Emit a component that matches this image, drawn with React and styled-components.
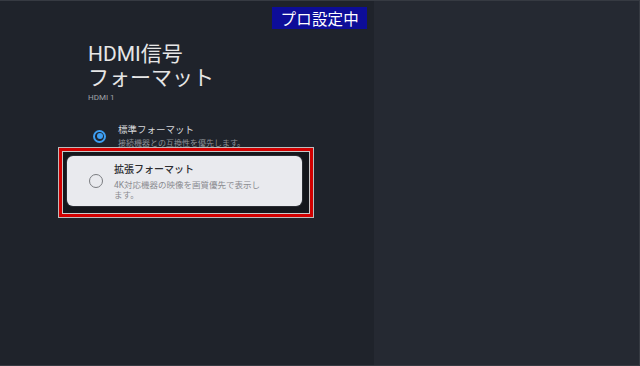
import React from "react";
import styled, { createGlobalStyle } from "styled-components";

const Global = createGlobalStyle`
  html, body { margin: 0; padding: 0; background: #1f232b; }
  * { box-sizing: border-box; }
  body { font-family: "Roboto", "Noto Sans CJK JP", sans-serif; }
`;

const Screen = styled.div`
  width: 640px;
  height: 366px;
  display: flex;
  border-top: 1px solid #363a42;
  border-right: 1px solid #363a42;
  border-bottom: 1px solid #363a42;
  overflow: hidden;
`;

const LeftPanel = styled.div`
  width: 374px;
  flex: none;
  background: #1f232b;
  display: flex;
  flex-direction: column;
  padding-top: 6px;
`;

const RightPanel = styled.div`
  flex: 1;
  background: #252932;
`;

const Badge = styled.div`
  align-self: flex-end;
  margin-right: 7px;
  height: 22px;
  padding: 0 8px;
  background: #0d0d98;
  color: #ffffff;
  font-family: "Noto Sans CJK JP", sans-serif;
  font-size: 15.5px;
  font-weight: 400;
  line-height: 22px;
  letter-spacing: 0.2px;
`;

const Header = styled.div`
  margin-top: 13px;
  padding-left: 88px;
  display: flex;
  flex-direction: column;
`;

const Title = styled.h1`
  margin: 0;
  font-family: "Roboto", "Noto Sans CJK JP", sans-serif;
  font-weight: 400;
  font-size: 21px;
  line-height: 24px;
  color: #e6e6e6;
`;

const SubTitle = styled.div`
  margin-top: 3px;
  font-family: "Roboto", sans-serif;
  font-size: 8px;
  line-height: 10px;
  color: #a0a3a8;
`;

const Options = styled.div`
  margin-top: 20px;
  display: flex;
  flex-direction: column;
`;

const Row = styled.div`
  display: flex;
  align-items: center;
  padding-left: 93px;
  gap: 12px;
`;

const RadioDot = styled.span`
  flex: none;
  width: ${(p) => p.$size}px;
  height: ${(p) => p.$size}px;
  border-radius: 50%;
  border: ${(p) => (p.$checked ? "2px solid #3d9ef2" : "1.5px solid #7a7c80")};
  display: flex;
  align-items: center;
  justify-content: center;
  &::after {
    content: "";
    display: ${(p) => (p.$checked ? "block" : "none")};
    width: 6px;
    height: 6px;
    border-radius: 50%;
    background: #3d9ef2;
  }
`;

const TextCol = styled.div`
  display: flex;
  flex-direction: column;
`;

const OptTitle = styled.div`
  font-family: "Noto Sans CJK JP", sans-serif;
  font-size: ${(p) => (p.$focused ? "10px" : "9.5px")};
  font-weight: ${(p) => (p.$focused ? 500 : 400)};
  line-height: 12px;
  color: ${(p) => (p.$focused ? "#2b2c30" : "#d6d7da")};
`;

const OptDesc = styled.div`
  margin-top: ${(p) => (p.$focused ? "5px" : "4px")};
  max-width: ${(p) => (p.$focused ? "150px" : "none")};
  font-family: "Roboto", "Noto Sans CJK JP", sans-serif;
  font-size: ${(p) => (p.$focused ? "8.5px" : "8px")};
  line-height: 10px;
  color: ${(p) => (p.$focused ? "#8a8b90" : "#8d9096")};
`;

const FocusFrame = styled.div`
  position: relative;
  z-index: 1;
  margin-top: -2px;
  margin-left: 58px;
  width: 256px;
  height: 71px;
  border: 1px solid #bcbcbc;
  background: #d20000;
  padding: 3px;
`;

const FrameInner = styled.div`
  height: 100%;
  border: 1px solid #c9c9c9;
  background: #15171c;
  padding: 4px 7px 7px 4px;
`;

const Card = styled.div`
  height: 100%;
  background: #e9eaee;
  border-radius: 6px;
  box-shadow: 0 0 0 1px #2a2d33;
  display: flex;
  align-items: center;
  padding-left: 22px;
  gap: 11px;
`;

export default function App() {
  return (
    <>
      <Global />
      <Screen>
        <LeftPanel>
          <Badge>プロ設定中</Badge>
          <Header>
            <Title>
              HDMI信号
              <br />
              フォーマット
            </Title>
            <SubTitle>HDMI 1</SubTitle>
          </Header>
          <Options>
            <Row>
              <RadioDot $checked $size={13} />
              <TextCol>
                <OptTitle>標準フォーマット</OptTitle>
                <OptDesc>接続機器との互換性を優先します。</OptDesc>
              </TextCol>
            </Row>
            <FocusFrame>
              <FrameInner>
                <Card>
                  <RadioDot $size={14} />
                  <TextCol>
                    <OptTitle $focused>拡張フォーマット</OptTitle>
                    <OptDesc $focused>4K対応機器の映像を画質優先で表示します。</OptDesc>
                  </TextCol>
                </Card>
              </FrameInner>
            </FocusFrame>
          </Options>
        </LeftPanel>
        <RightPanel />
      </Screen>
    </>
  );
}
